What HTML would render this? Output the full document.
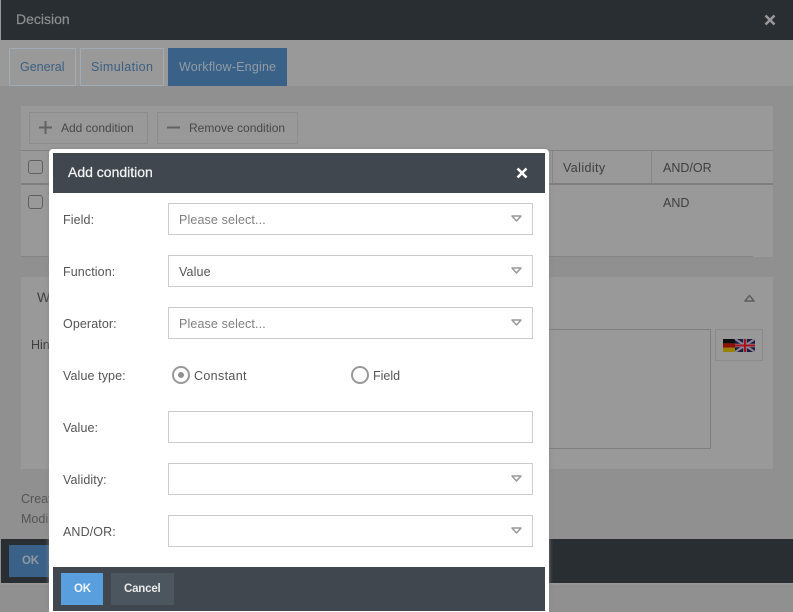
<!DOCTYPE html>
<html><head><meta charset="utf-8"><style>
html,body{margin:0;padding:0}
body{width:793px;height:612px;position:relative;overflow:hidden;background:#909090;font-family:"Liberation Sans",sans-serif;font-size:12.5px;color:#4a4a4a}
.a{position:absolute;box-sizing:border-box}
.t{position:absolute;white-space:nowrap;line-height:16px}
.bgt{color:#3f3f3f}
.fld{position:absolute;left:168px;width:365px;height:32px;border:1px solid #ccc;background:#fff;box-sizing:border-box;padding-left:10px;line-height:32px;color:#555;letter-spacing:.13px}
.ph{color:#808080}
.lb{position:absolute;left:63px;line-height:16px;color:#555;white-space:nowrap;letter-spacing:.1px}
.ar{position:absolute;left:511px;width:11px;height:7px}
</style></head><body>
<div class="a" style="left:0;top:0;width:793px;height:86px;background:#999"></div>
<div class="a" style="left:1px;top:0;width:792px;height:40px;background:#292e32"></div>
<div class="t" style="left:16px;top:11px;font-size:14px;color:#8d8f91;-webkit-text-stroke:.2px #8d8f91">Decision</div>
<svg class="a" style="left:764px;top:14px" width="12" height="12"><path d="M1.5 1.5L10.5 10.5M10.5 1.5L1.5 10.5" stroke="#969899" stroke-width="2.6"/></svg>

<div class="a" style="left:9px;top:48px;width:67px;height:38px;border:1px solid #a0abb5;background:#999"></div>
<div class="t" style="left:20px;top:59px;color:#3c5f80">General</div>
<div class="a" style="left:80px;top:48px;width:84px;height:38px;border:1px solid #a0abb5;background:#999"></div>
<div class="t" style="left:91px;top:59px;color:#3c5f80;letter-spacing:.4px">Simulation</div>
<div class="a" style="left:168px;top:48px;width:119px;height:38px;background:#3a6288"></div>
<div class="t" style="left:179px;top:59px;color:#919ba5;letter-spacing:.2px">Workflow-Engine</div>

<div class="a" style="left:21px;top:106px;width:752px;height:151px;background:#999"></div>
<div class="a" style="left:29px;top:112px;width:119px;height:32px;border:1px solid #8c8c8c"></div>
<svg class="a" style="left:39px;top:121px" width="13" height="13"><path d="M6.5 0V13M0 6.5H13" stroke="#636363" stroke-width="2"/></svg>
<div class="t" style="left:61px;top:120px;font-size:12px;color:#484848">Add condition</div>
<div class="a" style="left:157px;top:112px;width:141px;height:32px;border:1px solid #8c8c8c"></div>
<svg class="a" style="left:167px;top:121px" width="13" height="13"><path d="M0 6.5H13" stroke="#636363" stroke-width="2"/></svg>
<div class="t" style="left:189px;top:120px;font-size:12px;color:#484848">Remove condition</div>

<div class="a" style="left:21px;top:150px;width:752px;height:1px;background:#818181"></div>
<div class="a" style="left:21px;top:183px;width:752px;height:2px;background:#7e7e7e"></div>
<div class="a" style="left:552px;top:151px;width:1px;height:32px;background:#868686"></div>
<div class="a" style="left:651px;top:151px;width:1px;height:32px;background:#868686"></div>
<div class="a" style="left:28px;top:160px;width:15px;height:14px;border:1.5px solid #5f5f5f;border-radius:3px"></div>
<div class="a" style="left:28px;top:195px;width:15px;height:14px;border:1.5px solid #5f5f5f;border-radius:3px"></div>
<div class="t bgt" style="left:563px;top:160px;letter-spacing:.4px">Validity</div>
<div class="t bgt" style="left:663px;top:160px">AND/OR</div>
<div class="t bgt" style="left:663px;top:195px">AND</div>
<div class="a" style="left:21px;top:256px;width:732px;height:1px;background:#858585"></div>

<div class="a" style="left:21px;top:277px;width:752px;height:192px;background:#999"></div>
<div class="t bgt" style="left:37px;top:289px;font-size:14px">W</div>
<div class="t bgt" style="left:31px;top:337px">Hin</div>
<svg class="a" style="left:744px;top:294px" width="11" height="8"><path d="M1 7L5.5 1.5L10 7Z" fill="none" stroke="#5e5e5e" stroke-width="1.5" stroke-linejoin="round"/></svg>
<div class="a" style="left:500px;top:329px;width:211px;height:120px;border:1px solid #7f7f7f"></div>
<div class="a" style="left:715px;top:329px;width:48px;height:32px;border:1px solid #8b8b8b"></div>
<svg class="a" style="left:723px;top:339px" width="32" height="13" viewBox="0 0 32 13">
<rect width="12" height="4.4" fill="#0e0e0e"/><rect y="4.4" width="12" height="4.3" fill="#8c1300"/><rect y="8.7" width="12" height="4.3" fill="#998200"/>
<rect x="12" width="20" height="13" fill="#1b1c45"/>
<path d="M12 0L32 13M32 0L12 13" stroke="#8f8290" stroke-width="2.2"/>
<path d="M22 0V13M12 6.5H32" stroke="#8f8a90" stroke-width="3.6"/>
<path d="M22 0V13M12 6.5H32" stroke="#a61420" stroke-width="2"/>
</svg>
<div class="t" style="left:21px;top:491px;color:#555">Creat</div>
<div class="t" style="left:21px;top:511px;color:#555">Modi</div>

<div class="a" style="left:1px;top:539px;width:792px;height:44px;background:#292e32"></div>
<div class="a" style="left:0;top:583px;width:793px;height:4px;background:linear-gradient(#9a9a9a,#8b8b8b)"></div>
<div class="a" style="left:9px;top:545px;width:45px;height:32px;background:#3a6288"></div>
<div class="t" style="left:22px;top:553px;color:#8f99a3;font-weight:bold;font-size:11.5px;letter-spacing:-.2px">OK</div>

<div class="a" style="left:49px;top:149px;width:500px;height:463px;background:#fff;border-radius:4px 4px 0 0;box-shadow:0 0 4px #888"></div>
<div class="a" style="left:53px;top:153px;width:492px;height:40px;background:#40474f"></div>
<div class="t" style="left:68px;top:164px;font-size:14px;color:#f2f3f3;-webkit-text-stroke:.25px #f2f3f3">Add condition</div>
<svg class="a" style="left:516px;top:167px" width="12" height="12"><path d="M1.5 1.5L10.5 10.5M10.5 1.5L1.5 10.5" stroke="#fff" stroke-width="2.6"/></svg>

<div class="lb" style="top:212px">Field:</div>
<div class="fld ph" style="top:203px">Please select...</div>
<div class="lb" style="top:264px">Function:</div>
<div class="fld" style="top:255px">Value</div>
<div class="lb" style="top:316px">Operator:</div>
<div class="fld ph" style="top:307px">Please select...</div>
<div class="lb" style="top:368px">Value type:</div>
<div class="a" style="left:172px;top:366px;width:18px;height:18px;border:2px solid #999;border-radius:50%"></div>
<div class="a" style="left:178px;top:372px;width:6px;height:6px;background:#909090;border-radius:50%"></div>
<div class="t" style="left:194px;top:368px;color:#555;letter-spacing:.35px">Constant</div>
<div class="a" style="left:351px;top:366px;width:18px;height:18px;border:2px solid #999;border-radius:50%"></div>
<div class="t" style="left:373px;top:368px;color:#555">Field</div>
<div class="lb" style="top:420px">Value:</div>
<div class="fld" style="top:411px"></div>
<div class="lb" style="top:472px">Validity:</div>
<div class="fld" style="top:463px"></div>
<div class="lb" style="top:524px">AND/OR:</div>
<div class="fld" style="top:515px"></div>

<svg class="ar" style="top:215px" viewBox="0 0 11 7"><path d="M1 1H10L5.5 6Z" fill="none" stroke="#999" stroke-width="1.5" stroke-linejoin="round"/></svg>
<svg class="ar" style="top:267px" viewBox="0 0 11 7"><path d="M1 1H10L5.5 6Z" fill="none" stroke="#999" stroke-width="1.5" stroke-linejoin="round"/></svg>
<svg class="ar" style="top:319px" viewBox="0 0 11 7"><path d="M1 1H10L5.5 6Z" fill="none" stroke="#999" stroke-width="1.5" stroke-linejoin="round"/></svg>
<svg class="ar" style="top:475px" viewBox="0 0 11 7"><path d="M1 1H10L5.5 6Z" fill="none" stroke="#999" stroke-width="1.5" stroke-linejoin="round"/></svg>
<svg class="ar" style="top:527px" viewBox="0 0 11 7"><path d="M1 1H10L5.5 6Z" fill="none" stroke="#999" stroke-width="1.5" stroke-linejoin="round"/></svg>

<div class="a" style="left:53px;top:567px;width:492px;height:44px;background:#40474f"></div>
<div class="a" style="left:61px;top:573px;width:42px;height:32px;background:#5a9fdd"></div>
<div class="t" style="left:74px;top:581px;color:#eef4fa;font-weight:bold;font-size:11.5px;letter-spacing:-.2px">OK</div>
<div class="a" style="left:111px;top:573px;width:63px;height:32px;background:#4c565e"></div>
<div class="t" style="left:124px;top:581px;color:#e8e9ea;font-weight:bold;font-size:11.5px;letter-spacing:-.2px">Cancel</div>
</body></html>
